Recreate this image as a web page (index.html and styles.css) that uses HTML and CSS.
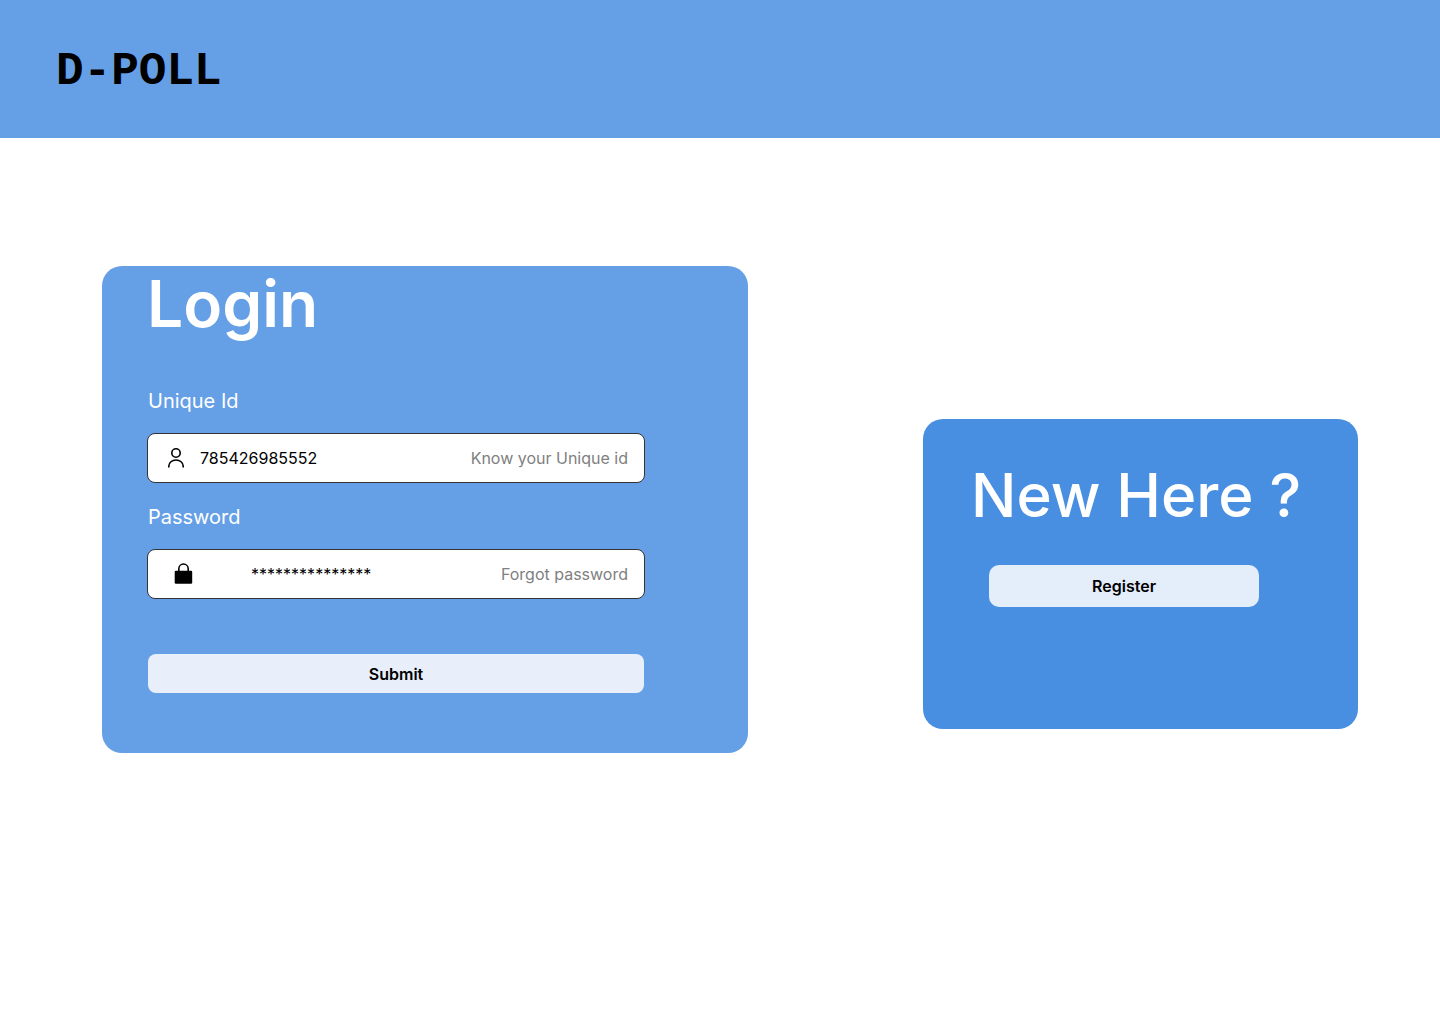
FILE: index.html
```html
<!DOCTYPE html>
<html lang="en">
<head>
<meta charset="utf-8">
<meta name="viewport" content="width=device-width, initial-scale=1">
<title>D-Poll</title>
<link rel="stylesheet" href="styles.css">
</head>
<body>
<header class="header"><a class="logo" href="#">D-POLL</a></header>
<main class="main">
  <form class="card login">
    <h1 class="title login-title">Login</h1>
    <label class="label" for="uid">Unique Id</label>
    <div class="field">
      <svg class="icon" viewBox="0 0 24 24" fill="none" stroke="#000" stroke-width="1.6" aria-hidden="true"><circle cx="12" cy="7" r="4.2"/><path d="M4.800 21.500v-1.500a7.200 6 0 0 1 14.400 0v1.500"/></svg>
      <input class="input" id="uid" type="text" value="785426985552">
      <a class="hint" href="#">Know your Unique id</a>
    </div>
    <label class="label" for="pw">Password</label>
    <div class="field field-password">
      <svg class="icon" viewBox="0 0 24 24" aria-hidden="true"><path d="M6.800 10V7a4.700 5 0 0 1 9.400 0v3" fill="none" stroke="#000" stroke-width="1.600"/><rect x="2.700" y="8.700" width="17.500" height="13" rx="1.200"/></svg>
      <input class="input" id="pw" type="text" value="***************" autocomplete="off">
      <a class="hint" href="#">Forgot password</a>
    </div>
    <button class="button submit" type="submit">Submit</button>
  </form>
  <section class="card signup">
    <h2 class="title">New Here ?</h2>
    <button class="button register" type="button">Register</button>
  </section>
</main>
</body>
</html>
```
FILE: styles.css
```css
* { box-sizing: border-box; }

body {
  margin: 0;
  background: #fff;
  color: #000;
  font-family: Inter, "Liberation Sans", sans-serif;
  font-size: 16px;
  line-height: 24px;
}

.header {
  display: flex;
  align-items: center;
  padding: 43px 56px 37px;
  background: #659fe6;
}

.logo {
  color: #000;
  font: bold 46px/58px "Liberation Mono", monospace;
  text-decoration: none;
}

.main {
  display: grid;
  grid-template-columns: minmax(0, 646fr) minmax(0, 435fr);
  align-items: center;
  gap: 175px;
  padding: 128px 82px 128px 102px;
}

.card {
  display: flex;
  flex-direction: column;
  border-radius: 20px;
}

.login {
  padding: 0 103px 60px 45px;
  background: #659fe6;
}

.signup {
  margin-top: 129px;
  padding: 40px 99px 122px 48px;
  background: #488fe2;
}

.title {
  margin: 0;
  color: #fff;
  font-size: 60px;
  font-weight: 500;
  line-height: 72px;
  white-space: nowrap;
}

.login-title {
  margin: 2px 0 36px;
  font-size: 64px;
  font-weight: 600;
}

.label {
  padding: 9px 1px 16px;
  color: #fff;
  font-size: 20px;
  line-height: 32px;
}

.field {
  display: flex;
  align-items: center;
  gap: 12px;
  height: 50px;
  margin-bottom: 9px;
  padding: 0 16px;
  border: 1px solid #333;
  border-radius: 8px;
  background: #fff;
}

.field-password {
  gap: 55px;
  padding-left: 24px;
}

.icon { flex: none; width: 24px; height: 24px; }

.input {
  flex: 1;
  min-width: 0;
  padding: 0;
  border: 0;
  outline: 0;
  background: none;
  color: #000;
  font: inherit;
}

.hint {
  color: #808080;
  text-decoration: none;
  white-space: nowrap;
}

.button {
  border: 0;
  border-radius: 8px;
  color: #000;
  font: 600 16px/24px Inter, "Liberation Sans", sans-serif;
  cursor: pointer;
}

.submit {
  margin: 46px 1px 0;
  padding: 8px 16px 7px;
  background: #e8effb;
}

.register {
  margin: 34px 0 0 18px;
  padding: 9px;
  border-radius: 10px;
  background: #e4edfa;
}
```
